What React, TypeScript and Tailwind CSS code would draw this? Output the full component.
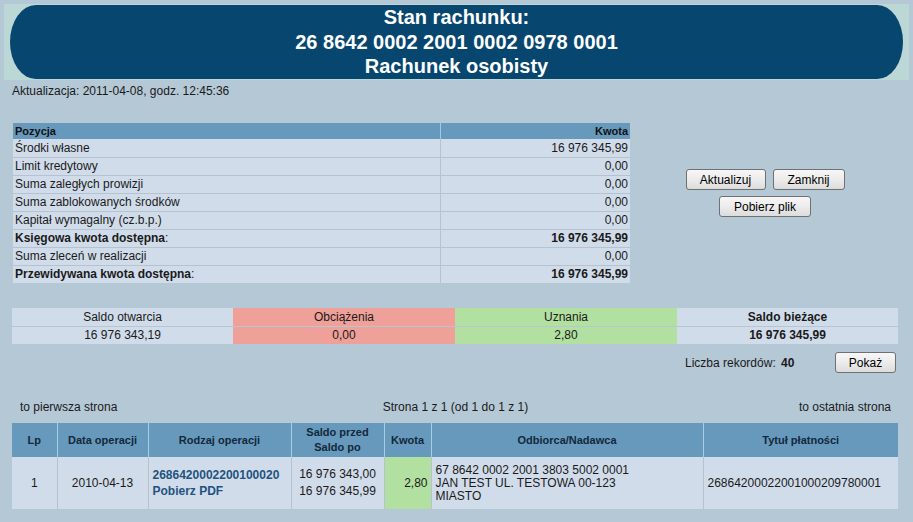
import React from 'react';

const positions = [
  { label: 'Środki własne', value: '16 976 345,99' },
  { label: 'Limit kredytowy', value: '0,00' },
  { label: 'Suma zaległych prowizji', value: '0,00' },
  { label: 'Suma zablokowanych środków', value: '0,00' },
  { label: 'Kapitał wymagalny (cz.b.p.)', value: '0,00' },
  { label: 'Księgowa kwota dostępna', value: '16 976 345,99', bold: true },
  { label: 'Suma zleceń w realizacji', value: '0,00' },
  { label: 'Przewidywana kwota dostępna', value: '16 976 345,99', bold: true },
];

function WinButton({ children, className = '' }: { children: React.ReactNode; className?: string }) {
  return (
    <button
      className={`h-[21px] rounded-[3px] border border-[#707070] bg-gradient-to-b from-[#f7f7f7] via-[#ececec] to-[#dcdcdc] text-[12px] text-black leading-none ${className}`}
    >
      {children}
    </button>
  );
}

export default function App() {
  return (
    <div className="min-h-[522px] w-[913px] bg-[#b5c8d6] font-['Liberation_Sans',Arial,sans-serif] text-[12px] text-[#1a1a1a]">
      {/* Header */}
      <div className="px-[4px] pt-[4px]">
        <div className="bg-[#bcd8d6] px-[6px] py-[1px]">
          <div className="flex h-[74px] flex-col items-center justify-center rounded-[28px/40px] bg-[#07466f] font-['Liberation_Sans_Narrow','Arial_Narrow','Liberation_Sans',sans-serif] text-[20px] font-bold leading-[24.5px] text-white">
            <div>Stan rachunku:</div>
            <div>26 8642 0002 2001 0002 0978 0001</div>
            <div>Rachunek osobisty</div>
          </div>
        </div>
      </div>

      <div className="mt-[4px] pl-[12px] font-['Liberation_Sans_Narrow','Arial_Narrow','Liberation_Sans',sans-serif] text-[12px] leading-[14px]">
        Aktualizacja: 2011-04-08, godz. 12:45:36
      </div>

      {/* Position table + buttons */}
      <div className="mt-[25px] flex">
        <table className="ml-[13px] w-[617px] border-collapse text-[12px] leading-[14px]">
          <thead>
            <tr className="h-[16px] bg-[#6699bb] text-[11px] font-bold text-[#111]">
              <th className="w-[427px] border-r border-[#9ccbe6] pl-[2px] text-left">Pozycja</th>
              <th className="pr-[2px] text-right">Kwota</th>
            </tr>
          </thead>
          <tbody>
            {positions.map((p) => (
              <tr key={p.label} className="h-[18px] border-b border-[#b6c3cf] bg-[#d1dcea] last:border-b-0">
                <td className="border-r border-[#b6c3cf] pl-[2px]">
                  {p.bold ? (
                    <>
                      <b>{p.label}</b>:
                    </>
                  ) : (
                    p.label
                  )}
                </td>
                <td className={`pr-[2px] text-right ${p.bold ? 'font-bold' : ''}`}>{p.value}</td>
              </tr>
            ))}
          </tbody>
        </table>

        <div className="flex flex-1 flex-col items-center gap-[6px] pt-[46px] pr-[13px]">
          <div className="flex gap-[7px]">
            <WinButton className="w-[80px]">Aktualizuj</WinButton>
            <WinButton className="w-[72px]">Zamknij</WinButton>
          </div>
          <WinButton className="w-[92px]">Pobierz plik</WinButton>
        </div>
      </div>

      {/* Summary */}
      <table className="ml-[12px] mt-[25px] w-[886px] border-collapse text-center text-[12px] leading-[14px]">
        <tbody>
          <tr className="h-[18px] border-b border-[#b8c6d2]">
            <td className="w-[221px] bg-[#d1dcea]">Saldo otwarcia</td>
            <td className="w-[222px] bg-[#efa098]">Obciążenia</td>
            <td className="w-[222px] bg-[#b2e0a0]">Uznania</td>
            <td className="bg-[#d1dcea] font-bold">Saldo bieżące</td>
          </tr>
          <tr className="h-[18px]">
            <td className="bg-[#d1dcea]">16 976 343,19</td>
            <td className="bg-[#efa098]">0,00</td>
            <td className="bg-[#b2e0a0]">2,80</td>
            <td className="bg-[#d1dcea] font-bold">16 976 345,99</td>
          </tr>
        </tbody>
      </table>

      <div className="mt-[8px] flex items-center">
        <div className="ml-[685px] w-[150px]">
          Liczba rekordów: <b className="ml-[2px]">40</b>
        </div>
        <WinButton className="w-[61px]">Pokaż</WinButton>
      </div>

      {/* Pagination */}
      <div className="mt-[25px] flex items-center justify-between pl-[20px] pr-[22px]">
        <span className="w-[200px]">to pierwsza strona</span>
        <span>Strona 1 z 1 (od 1 do 1 z 1)</span>
        <span className="w-[200px] text-right">to ostatnia strona</span>
      </div>

      {/* Operations */}
      <table className="ml-[12px] mt-[7px] w-[886px] border-collapse text-[12px] leading-[14px]">
        <thead>
          <tr className="h-[34px] bg-[#6699bb] text-[11px] font-bold leading-[15px] text-[#13283b]">
            <th className="w-[45px] border-r border-[#a7cde3]">Lp</th>
            <th className="w-[91px] border-r border-[#a7cde3]">Data operacji</th>
            <th className="w-[143px] border-r border-[#a7cde3]">Rodzaj operacji</th>
            <th className="w-[93px] border-r border-[#a7cde3]">
              Saldo przed
              <br />
              Saldo po
            </th>
            <th className="w-[47px] border-r border-[#a7cde3]">Kwota</th>
            <th className="w-[272px] border-r border-[#a7cde3]">Odbiorca/Nadawca</th>
            <th>Tytuł płatności</th>
          </tr>
        </thead>
        <tbody>
          <tr className="h-[52px] bg-[#d1dcea]">
            <td className="border-r border-[#b6c3cf] text-center">1</td>
            <td className="border-r border-[#b6c3cf] text-center">2010-04-13</td>
            <td className="border-r border-[#b6c3cf] pl-[4px] font-bold leading-[16px] text-[#22537f]">
              2686420002200100020
              <br />
              Pobierz PDF
            </td>
            <td className="border-r border-[#b6c3cf] text-center leading-[17px]">
              16 976 343,00
              <br />
              16 976 345,99
            </td>
            <td className="border-r border-[#b6c3cf] bg-[#b2e0a0] pr-[3px] text-right">2,80</td>
            <td className="border-r border-[#b6c3cf] pl-[4px] leading-[13px]">
              67 8642 0002 2001 3803 5002 0001
              <br />
              JAN TEST UL. TESTOWA 00-123
              <br />
              MIASTO
            </td>
            <td className="pl-[4px]">26864200022001000209780001</td>
          </tr>
        </tbody>
      </table>
    </div>
  );
}
